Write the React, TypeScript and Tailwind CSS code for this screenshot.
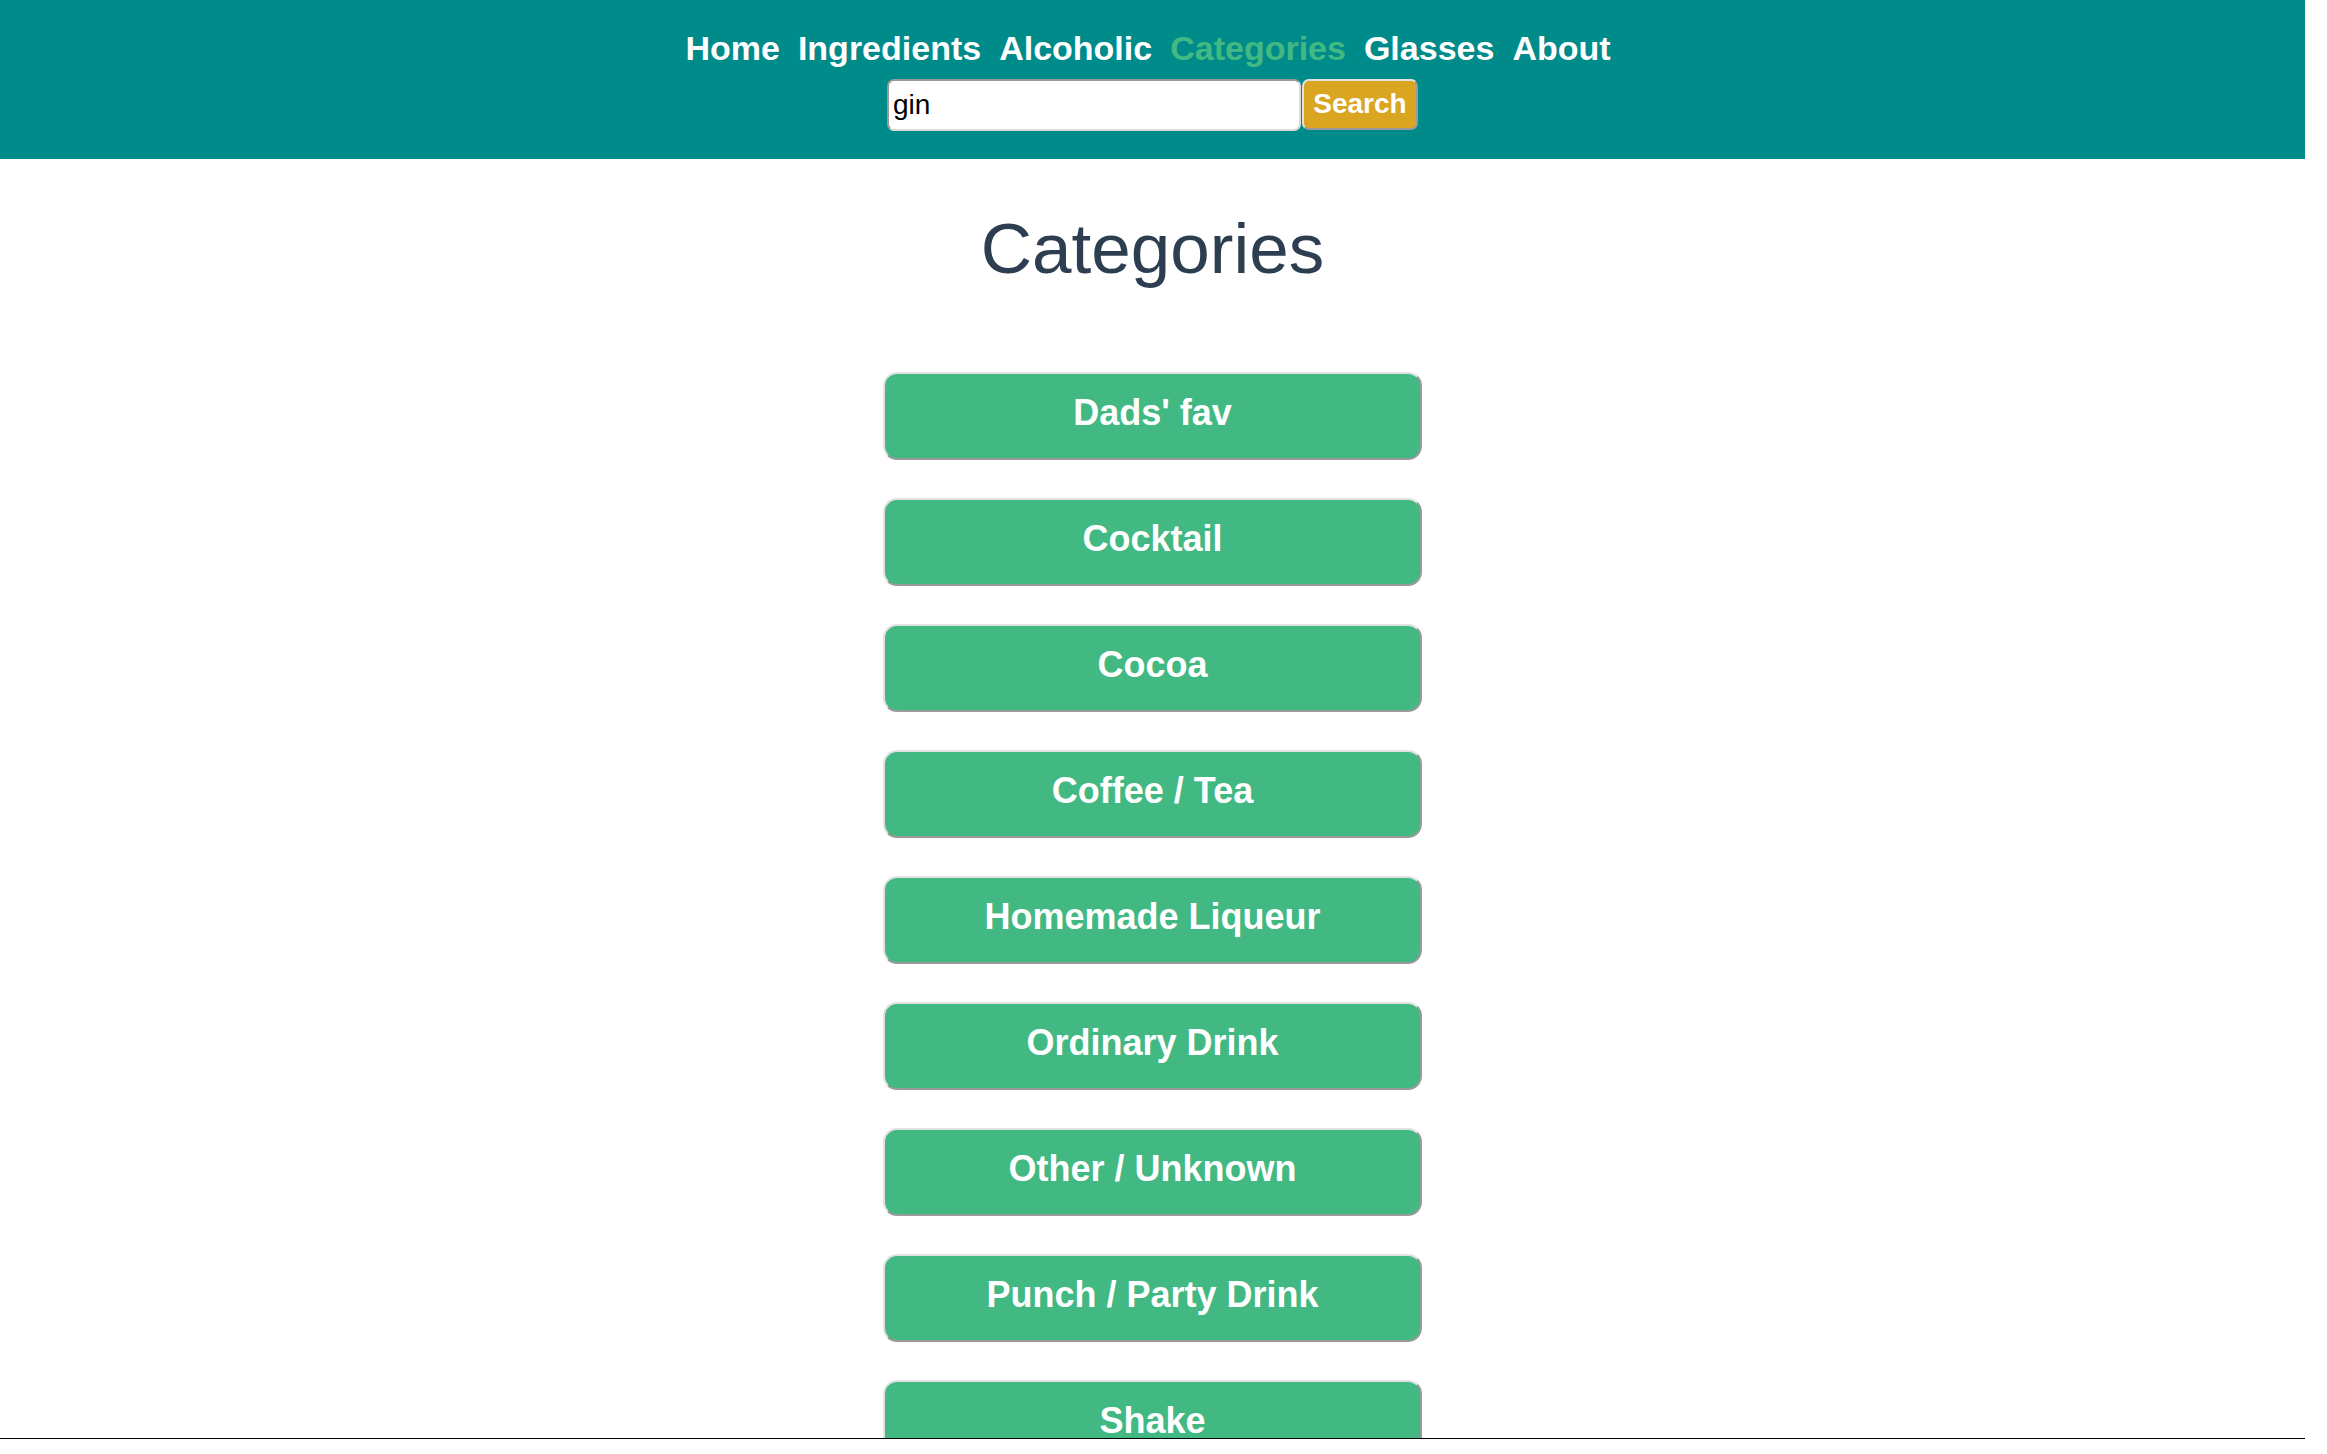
import { useState } from "react";

const navItems = ["Home", "Ingredients", "Alcoholic", "Categories", "Glasses", "About"];

const categories = [
  "Dads' fav",
  "Cocktail",
  "Cocoa",
  "Coffee / Tea",
  "Homemade Liqueur",
  "Ordinary Drink",
  "Other / Unknown",
  "Punch / Party Drink",
  "Shake",
  "Shot",
  "Soft Drink",
];

const App = () => {
  const [query, setQuery] = useState("gin");

  return (
    <div className="flex h-[1454px] w-full overflow-hidden bg-white font-['Liberation_Sans',Arial,sans-serif]">
      <div className="flex w-[2305px] shrink-0 flex-col">
        <div className="h-[1438px] shrink-0 overflow-hidden">
          {/* Header */}
          <header className="flex h-[159px] flex-col items-center bg-[#008b8b] pt-[29px]">
            <nav className="flex gap-[18px] pr-[9px]">
              {navItems.map((item) => (
                <a
                  key={item}
                  href="#"
                  className={`text-[34px] font-bold leading-[38px] ${
                    item === "Categories" ? "text-[#42b983]" : "text-white"
                  }`}
                >
                  {item}
                </a>
              ))}
            </nav>
            <div className="mt-[12px] flex">
              <input
                value={query}
                onChange={(e) => setQuery(e.target.value)}
                className="h-[52px] w-[414px] rounded-[7px] border-2 border-b-[#dcdcdc] border-l-[#9a9a9a] border-r-[#dcdcdc] border-t-[#9a9a9a] bg-white px-[4px] text-[28px] text-black outline-none"
              />
              <button className="ml-[1px] h-[51px] w-[116px] rounded-[7px] border-2 border-b-[#9a9a9a] border-l-[#e2e2e2] border-r-[#9a9a9a] border-t-[#e2e2e2] bg-[#daa520] pb-[2px] text-[28px] font-bold text-white">
                Search
              </button>
            </div>
          </header>

          {/* Content */}
          <main className="flex flex-col items-center text-[#2c3e50]">
            <h1 className="mt-[48px] text-[71px] leading-[84px]">Categories</h1>
            <div className="mt-[81px] flex flex-col gap-[38px]">
              {categories.map((cat) => (
                <button
                  key={cat}
                  className="flex h-[88px] w-[539px] items-center justify-center rounded-[14px] border-2 border-b-[#9a9a9a] border-l-[#e2e2e2] border-r-[#9a9a9a] border-t-[#e2e2e2] bg-[#42b983] pb-[7px] text-[36px] font-bold text-white"
                >
                  {cat}
                </button>
              ))}
            </div>
          </main>
        </div>
        <div className="flex-1 border-t border-black bg-white" />
      </div>
      <div className="flex-1 bg-white" />
    </div>
  );
};

export default App;
